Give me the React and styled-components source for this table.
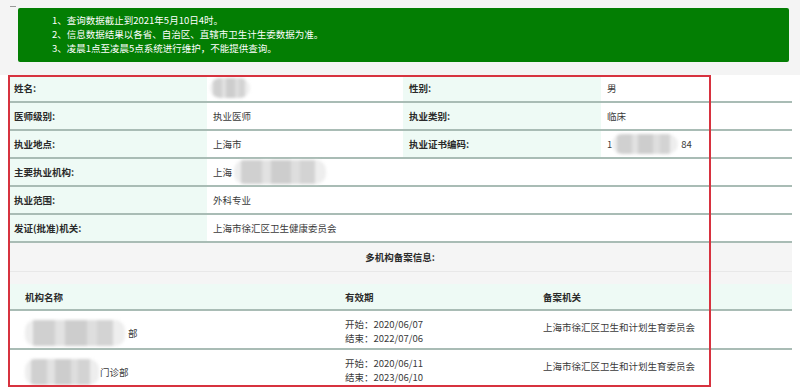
import React from 'react';
import styled, { createGlobalStyle } from 'styled-components';

const GlobalStyle = createGlobalStyle`
  html, body { margin: 0; padding: 0; background: #fff; }
  body {
    font-family: "Noto Sans CJK SC", "Liberation Sans", sans-serif;
    font-size: 9.5px;
    color: #333;
  }
`;

const LINE = '#a9bcb5';
const MINT = '#eefaf5';

const Page = styled.div`
  position: relative;
  width: 800px;
  height: 387px;
  overflow: hidden;
  background: #fff;
`;

const Top = styled.div`
  background: #f4f4f4;
  padding: 8px 11px 13px 18px;
`;

const Notice = styled.div`
  background: #037e03;
  border-radius: 2px;
  height: 54px;
  box-sizing: border-box;
  padding: 5px 0 0 34px;
  color: #fff;
  line-height: 14px;
`;

const Table = styled.div`
  margin: 0 8px;
  width: 784px;
`;

const Row = styled.div`
  display: grid;
  grid-template-columns: ${(p) => (p.$wide ? '199px 1fr' : '199px 196px 198px 1fr')};
  height: 26px;
  border-bottom: 2px solid ${LINE};
`;

const Cell = styled.div`
  display: flex;
  align-items: center;
  padding-left: 6px;
  background: ${(p) => (p.$label ? MINT : '#fff')};
  font-weight: ${(p) => (p.$label ? 700 : 400)};
  color: ${(p) => (p.$label ? '#2a2a2a' : '#3a3a3a')};
  white-space: nowrap;
`;

const SectionTitle = styled.div`
  height: 28px;
  display: flex;
  align-items: center;
  justify-content: center;
  background: #f5f5f5;
  border-bottom: 1px solid #e8e8e8;
  font-weight: 700;
  color: #2a2a2a;
`;

const SubArea = styled.div`
  background: #f5f5f5;
  padding-top: 12px;
`;

const SubRow = styled.div`
  display: grid;
  grid-template-columns: 320px 198px 1fr;
  padding-left: 17px;
  height: ${(p) => (p.$head ? '25px' : '37px')};
  background: ${(p) => (p.$head ? MINT : '#fff')};
  border-bottom: 2px solid ${LINE};
  align-items: ${(p) => (p.$head ? 'center' : 'start')};
`;

const SubCell = styled.div`
  display: flex;
  align-items: center;
  line-height: 14px;
  padding-top: ${(p) => (p.$head ? 0 : p.$two ? 6 : 9)}px;
  font-weight: ${(p) => (p.$head ? 700 : 400)};
  color: ${(p) => (p.$head ? '#2a2a2a' : '#3a3a3a')};
  white-space: nowrap;
`;

const Dates = styled.div`
  display: flex;
  flex-direction: column;
`;

const Blur = styled.span`
  display: inline-block;
  width: ${(p) => p.$w}px;
  height: ${(p) => p.$h}px;
  margin: 0 ${(p) => p.$mr || 0}px 0 ${(p) => p.$ml || 0}px;
  border-radius: 10px;
  background: linear-gradient(
    90deg,
    #eeeeee 0 8%,
    #d0d0d0 8% 30%,
    #e2e2e2 30% 40%,
    #cdcdcd 40% 62%,
    #dedede 62% 72%,
    #d3d3d3 72% 88%,
    #eeeeee 88% 100%
  );
  filter: blur(1.6px);
  flex-shrink: 0;
`;

const RedBox = styled.div`
  position: absolute;
  left: 8px;
  top: 75px;
  width: 703px;
  height: 312px;
  box-sizing: border-box;
  border: 2px solid #d7323f;
  pointer-events: none;
`;

const Dash = styled.div`
  position: absolute;
  left: 10px;
  top: 6px;
  width: 6px;
  height: 1px;
  background: #999;
`;

export default function App() {
  return (
    <Page>
      <GlobalStyle />
      <Dash />
      <Top>
        <Notice>
          <div>1、查询数据截止到2021年5月10日4时。</div>
          <div>2、信息数据结果以各省、自治区、直辖市卫生计生委数据为准。</div>
          <div>3、凌晨1点至凌晨5点系统进行维护，不能提供查询。</div>
        </Notice>
      </Top>
      <Table>
        <Row>
          <Cell $label>姓名:</Cell>
          <Cell><Blur $w={40} $h={20} $ml={-3} /></Cell>
          <Cell $label>性别:</Cell>
          <Cell>男</Cell>
        </Row>
        <Row>
          <Cell $label>医师级别:</Cell>
          <Cell>执业医师</Cell>
          <Cell $label>执业类别:</Cell>
          <Cell>临床</Cell>
        </Row>
        <Row>
          <Cell $label>执业地点:</Cell>
          <Cell>上海市</Cell>
          <Cell $label>执业证书编码:</Cell>
          <Cell>1<Blur $w={66} $h={20} $ml={0} $mr={3} />84</Cell>
        </Row>
        <Row $wide>
          <Cell $label>主要执业机构:</Cell>
          <Cell>上海<Blur $w={92} $h={24} $ml={2} /></Cell>
        </Row>
        <Row $wide>
          <Cell $label>执业范围:</Cell>
          <Cell>外科专业</Cell>
        </Row>
        <Row $wide>
          <Cell $label>发证(批准)机关:</Cell>
          <Cell>上海市徐汇区卫生健康委员会</Cell>
        </Row>
        <SectionTitle>多机构备案信息:</SectionTitle>
        <SubArea>
          <SubRow $head>
            <SubCell $head>机构名称</SubCell>
            <SubCell $head>有效期</SubCell>
            <SubCell $head>备案机关</SubCell>
          </SubRow>
          <SubRow>
            <SubCell><Blur $w={100} $h={26} $mr={3} />部</SubCell>
            <SubCell $two>
              <Dates>
                <span>开始：2020/06/07</span>
                <span>结束：2022/07/06</span>
              </Dates>
            </SubCell>
            <SubCell>上海市徐汇区卫生和计划生育委员会</SubCell>
          </SubRow>
          <SubRow>
            <SubCell><Blur $w={74} $h={26} $mr={1} />门诊部</SubCell>
            <SubCell $two>
              <Dates>
                <span>开始：2020/06/11</span>
                <span>结束：2023/06/10</span>
              </Dates>
            </SubCell>
            <SubCell>上海市徐汇区卫生和计划生育委员会</SubCell>
          </SubRow>
        </SubArea>
      </Table>
      <RedBox />
    </Page>
  );
}
